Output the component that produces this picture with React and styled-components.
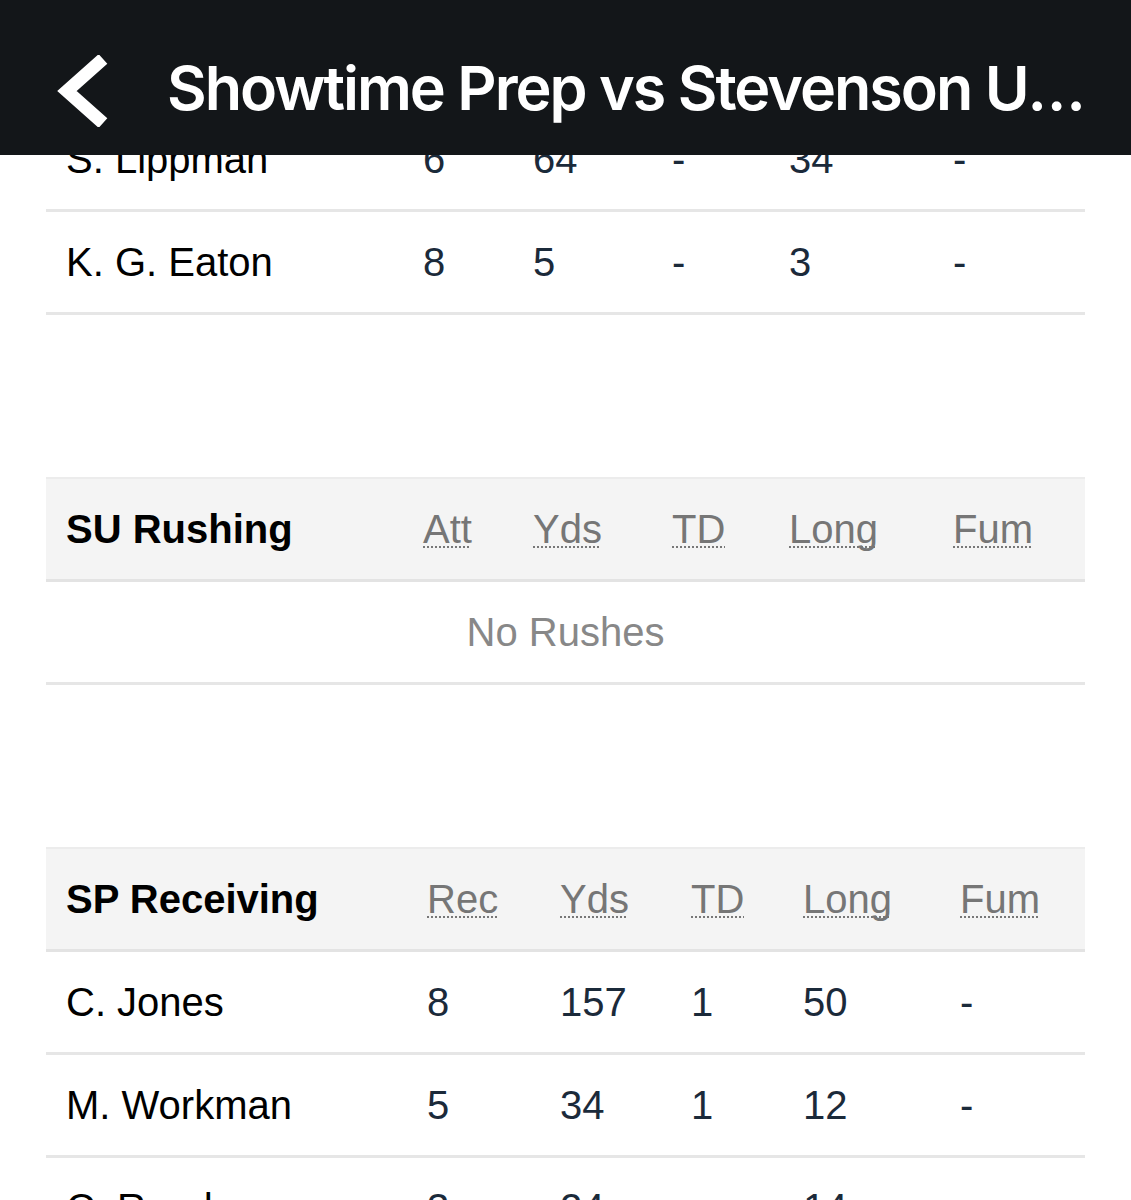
import React from 'react';
import styled, { createGlobalStyle } from 'styled-components';

// Global reset: page is a phone view scrolled part-way down the box score
const GlobalStyle = createGlobalStyle`
  html, body {
    margin: 0;
    padding: 0;
    overflow: hidden;
    background: #ffffff;
    font-family: "Liberation Sans", Arial, sans-serif;
  }
`;

// Fixed top bar that lies over the scrolled content
const NavBar = styled.header`
  position: fixed;
  top: 0;
  left: 0;
  right: 0;
  height: 155px;
  box-sizing: border-box;
  padding-top: 21px;
  background-color: #131619;
  display: flex;
  align-items: center;
  z-index: 10;
`;

const BackButton = styled.button`
  background: none;
  border: none;
  padding: 0;
  margin-left: 52px;
  margin-top: 6px;
  width: 62px;
  height: 80px;
  display: flex;
  align-items: center;
  justify-content: center;
  cursor: pointer;
`;

const Title = styled.h1`
  margin: 0 0 0 53px;
  flex: 1;
  min-width: 0;
  color: #ffffff;
  font-family: Inter, "Noto Sans", sans-serif;
  font-weight: 600;
  font-size: 61px;
  letter-spacing: -2px;
  white-space: nowrap;
  overflow: hidden;
  text-overflow: ellipsis;
  padding-right: 38px;
`;

// Scrolled content area
const Content = styled.main`
  padding-top: 109px;
  display: flex;
  flex-direction: column;
  gap: 162px;
`;

const Table = styled.section`
  margin: 0 46px;
  display: flex;
  flex-direction: column;
`;

const Row = styled.div`
  display: grid;
  grid-template-columns: ${(p) => p.cols};
  align-items: center;
  height: 100px;
  border-bottom: 3px solid #e6e6e6;
  font-size: 40px;
`;

const HeadRow = styled(Row)`
  background-color: #f4f4f4;
  border-top: 2px solid #ececec;
  border-bottom-color: #e3e3e3;
  height: 100px;
`;

const Name = styled.div`
  padding-left: 20px;
  color: #000000;
  white-space: nowrap;
`;

const Heading = styled(Name)`
  font-weight: bold;
`;

const Stat = styled.div`
  color: #1b2a3a;
`;

const LabelCell = styled.div``;

const Label = styled.abbr`
  color: #767676;
  text-decoration: underline dotted;
  text-decoration-thickness: 2px;
  text-underline-offset: 4px;
  text-decoration-skip-ink: none;
  text-decoration-color: #777777;
`;

const Empty = styled.div`
  height: 100px;
  display: flex;
  align-items: center;
  justify-content: center;
  border-bottom: 3px solid #e6e6e6;
  color: #888888;
  font-size: 40px;
`;

const wideCols = '377px 110px 139px 117px 164px 1fr';
const recCols = '381px 133px 131px 112px 157px 1fr';

const tables = [
  {
    key: 'prev',
    title: null,
    cols: wideCols,
    rows: [
      ['S. Lippman', '6', '64', '-', '34', '-'],
      ['K. G. Eaton', '8', '5', '-', '3', '-'],
    ],
  },
  {
    key: 'su-rush',
    title: 'SU Rushing',
    cols: wideCols,
    labels: ['Att', 'Yds', 'TD', 'Long', 'Fum'],
    rows: [],
    empty: 'No Rushes',
  },
  {
    key: 'sp-rec',
    title: 'SP Receiving',
    cols: recCols,
    labels: ['Rec', 'Yds', 'TD', 'Long', 'Fum'],
    rows: [
      ['C. Jones', '8', '157', '1', '50', '-'],
      ['M. Workman', '5', '34', '1', '12', '-'],
      ['C. Read', '3', '24', '-', '14', '-'],
    ],
  },
];

const ChevronLeft = () => (
  <svg width="56" height="72" viewBox="0 0 56 72">
    <polyline
      points="48,4 12,36 48,68"
      fill="none"
      stroke="#ffffff"
      strokeWidth="13"
      strokeLinejoin="miter"
      strokeLinecap="butt"
    />
  </svg>
);

const App = () => {
  return (
    <>
      <GlobalStyle />
      <NavBar>
        <BackButton aria-label="Back">
          <ChevronLeft />
        </BackButton>
        <Title>Showtime Prep vs Stevenson University</Title>
      </NavBar>
      <Content>
        {tables.map((t) => (
          <Table key={t.key}>
            {t.title && (
              <HeadRow cols={t.cols}>
                <Heading>{t.title}</Heading>
                {t.labels.map((l) => (
                  <LabelCell key={l}>
                    <Label>{l}</Label>
                  </LabelCell>
                ))}
              </HeadRow>
            )}
            {t.rows.length === 0 && t.empty ? (
              <Empty>{t.empty}</Empty>
            ) : (
              t.rows.map(([name, ...stats]) => (
                <Row cols={t.cols} key={name}>
                  <Name>{name}</Name>
                  {stats.map((s, i) => (
                    <Stat key={i}>{s}</Stat>
                  ))}
                </Row>
              ))
            )}
          </Table>
        ))}
      </Content>
    </>
  );
};

export default App;
